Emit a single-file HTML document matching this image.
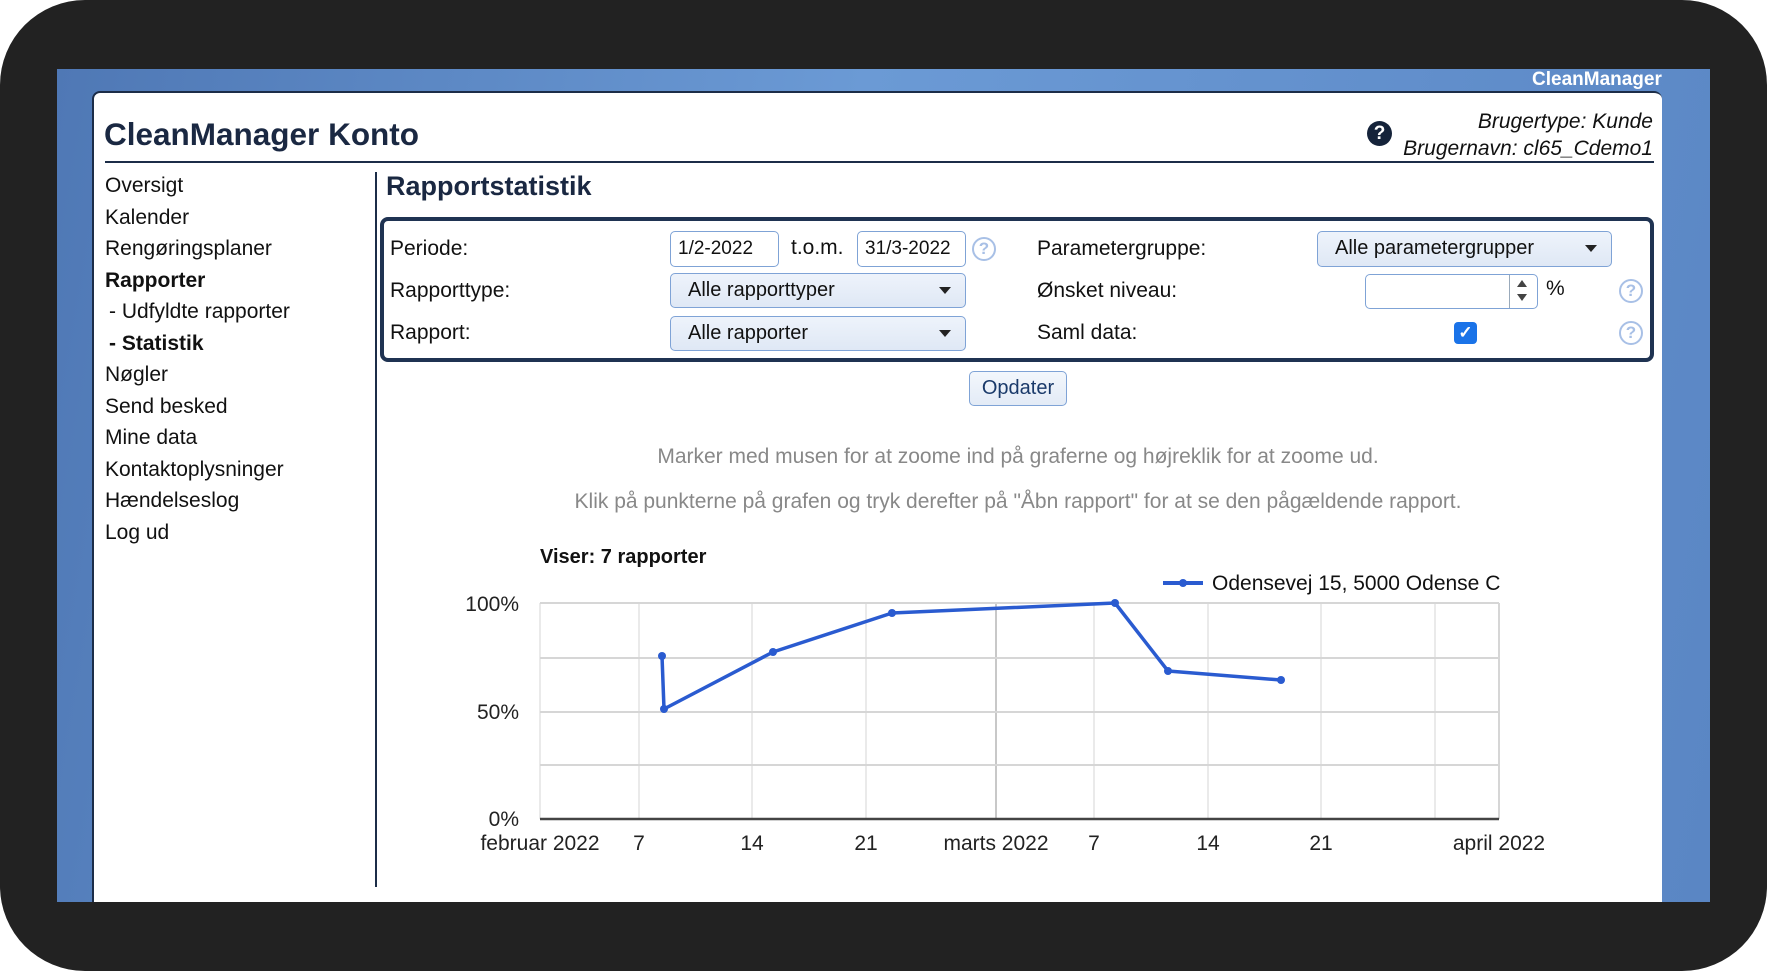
<!DOCTYPE html>
<html><head><meta charset="utf-8"><style>
*{margin:0;padding:0;box-sizing:border-box}
body{width:1767px;height:971px;background:#222;position:relative;overflow:hidden;font-family:"Liberation Sans",sans-serif;color:#111}
.a{position:absolute;white-space:nowrap}
#blue{left:57px;top:69px;width:1653px;height:833px;background:linear-gradient(100deg,#4f78b5 0%,#6b9ad5 45%,#5a86c4 100%)}
#panel{left:92px;top:91px;width:1570px;height:815px;background:#fff;border-radius:8px 8px 0 0;border-top:2px solid #1c2d48;border-left:2px solid #1c2d48}
.nav{left:105px;font-size:21px;color:#111}
.inp{border:1.5px solid #7fa3d6;border-radius:5px;background:#fff;font-size:19px;padding-left:7px;line-height:33px}
.sel{border:1.5px solid #7fa3d6;border-radius:5px;background:linear-gradient(#eef3fb,#dfe8f5);font-size:20px;padding-left:17px;line-height:32px}
.arr{position:absolute;right:14px;top:13px;width:0;height:0;border-left:6px solid transparent;border-right:6px solid transparent;border-top:7px solid #222}
.lbl{font-size:21px;left:390px}
.hq{width:24px;height:24px;border:2px solid #a8c0e6;border-radius:50%;color:#a8c0e6;font-size:17px;text-align:center;line-height:20px;font-weight:bold}
</style></head><body>
<div class="a" id="blue"></div>
<div class="a" style="left:1532px;top:69px;font-size:19px;font-weight:bold;color:#fff">CleanManager</div>
<div class="a" id="panel"></div>
<div class="a" style="left:104px;top:116px;font-size:31.5px;font-weight:bold;color:#1a2842">CleanManager Konto</div>
<div class="a" style="left:105px;top:161px;width:1549px;height:2px;background:#1c2d48"></div>
<div class="a" style="left:1367px;top:121px;width:25px;height:25px;border-radius:50%;background:#15233a;color:#fff;font-weight:bold;font-size:19px;text-align:center;line-height:25px">?</div>
<div class="a" style="right:114px;top:108px;font-size:21px;font-style:italic;text-align:right;line-height:27px">Brugertype: Kunde<br>Brugernavn: cl65_Cdemo1</div>

<div class="a nav" style="top:174px">Oversigt</div>
<div class="a nav" style="top:206px">Kalender</div>
<div class="a nav" style="top:237px">Rengøringsplaner</div>
<div class="a nav" style="top:269px;font-weight:bold">Rapporter</div>
<div class="a nav" style="top:300px;left:109px">- Udfyldte rapporter</div>
<div class="a nav" style="top:332px;left:109px;font-weight:bold">- Statistik</div>
<div class="a nav" style="top:363px">Nøgler</div>
<div class="a nav" style="top:395px">Send besked</div>
<div class="a nav" style="top:426px">Mine data</div>
<div class="a nav" style="top:458px">Kontaktoplysninger</div>
<div class="a nav" style="top:489px">Hændelseslog</div>
<div class="a nav" style="top:521px">Log ud</div>

<div class="a" style="left:375px;top:172px;width:2px;height:715px;background:#1c2d48"></div>
<div class="a" style="left:386px;top:171px;font-size:27px;font-weight:bold;color:#1a2842">Rapportstatistik</div>

<div class="a" style="left:380px;top:217px;width:1274px;height:145px;border:4px solid #1f3352;border-radius:8px"></div>
<div class="a lbl" style="top:237px">Periode:</div>
<div class="a lbl" style="top:279px">Rapporttype:</div>
<div class="a lbl" style="top:321px">Rapport:</div>
<div class="a inp" style="left:670px;top:231px;width:109px;height:36px">1/2-2022</div>
<div class="a" style="left:791px;top:236px;font-size:21px">t.o.m.</div>
<div class="a inp" style="left:857px;top:231px;width:109px;height:36px">31/3-2022</div>
<div class="a hq" style="left:972px;top:237px">?</div>
<div class="a sel" style="left:670px;top:273px;width:296px;height:35px">Alle rapporttyper<div class="arr"></div></div>
<div class="a sel" style="left:670px;top:316px;width:296px;height:35px">Alle rapporter<div class="arr"></div></div>

<div class="a" style="left:1037px;top:237px;font-size:21px">Parametergruppe:</div>
<div class="a" style="left:1037px;top:279px;font-size:21px">Ønsket niveau:</div>
<div class="a" style="left:1037px;top:321px;font-size:21px">Saml data:</div>
<div class="a sel" style="left:1317px;top:231px;width:295px;height:36px;line-height:33px">Alle parametergrupper<div class="arr"></div></div>
<div class="a inp" style="left:1365px;top:274px;width:173px;height:35px"></div>
<div class="a" style="left:1509px;top:275px;width:1px;height:33px;background:#9ab"></div>
<div class="a" style="left:1517px;top:280px;width:0;height:0;border-left:5px solid transparent;border-right:5px solid transparent;border-bottom:7px solid #444"></div>
<div class="a" style="left:1517px;top:294px;width:0;height:0;border-left:5px solid transparent;border-right:5px solid transparent;border-top:7px solid #444"></div>
<div class="a" style="left:1546px;top:277px;font-size:21px">%</div>
<div class="a hq" style="left:1619px;top:279px">?</div>
<div class="a" style="left:1454px;top:322px;width:23px;height:22px;border-radius:4px;background:#1a73e8;color:#fff;font-size:17px;text-align:center;line-height:22px;font-weight:bold">✓</div>
<div class="a hq" style="left:1619px;top:321px">?</div>

<div class="a" style="left:969px;top:371px;width:98px;height:35px;border:1.5px solid #7fa3d6;border-radius:5px;background:linear-gradient(#f3f7fc,#e3ebf6);font-size:20px;color:#1a3a6a;text-align:center;line-height:32px">Opdater</div>

<div class="a" style="left:0;width:2036px;top:445px;text-align:center;font-size:21px;color:#888">Marker med musen for at zoome ind på graferne og højreklik for at zoome ud.</div>
<div class="a" style="left:0;width:2036px;top:490px;text-align:center;font-size:21px;color:#888">Klik på punkterne på grafen og tryk derefter på "Åbn rapport" for at se den pågældende rapport.</div>

<svg class="a" style="left:0;top:0" width="1767" height="971" font-family="Liberation Sans, sans-serif">
<text x="540" y="563" font-size="20" font-weight="bold" fill="#111">Viser: 7 rapporter</text>
<line x1="1163" y1="583" x2="1203" y2="583" stroke="#2a5bd0" stroke-width="4"/>
<circle cx="1183" cy="583" r="4" fill="#2a5bd0"/>
<text x="1212" y="590" font-size="21" fill="#111">Odensevej 15, 5000 Odense C</text>
<g stroke="#e3e3e3" stroke-width="1.5">
<line x1="639" y1="603" x2="639" y2="819"/><line x1="752" y1="603" x2="752" y2="819"/><line x1="866" y1="603" x2="866" y2="819"/>
<line x1="1094" y1="603" x2="1094" y2="819"/><line x1="1208" y1="603" x2="1208" y2="819"/><line x1="1321" y1="603" x2="1321" y2="819"/><line x1="1435" y1="603" x2="1435" y2="819"/><line x1="540" y1="603" x2="540" y2="819"/>
</g>
<line x1="996" y1="603" x2="996" y2="819" stroke="#c8c8c8" stroke-width="2"/>
<g stroke="#d6d6d6" stroke-width="2">
<line x1="540" y1="603" x2="1499" y2="603"/><line x1="540" y1="658" x2="1499" y2="658"/><line x1="540" y1="712" x2="1499" y2="712"/><line x1="540" y1="765" x2="1499" y2="765"/><line x1="1499" y1="603" x2="1499" y2="819"/>
</g>
<line x1="540" y1="819" x2="1499" y2="819" stroke="#444" stroke-width="2.5"/>
<polyline points="662,656 664,709 773,652 892,613 1115,603 1168,671 1281,680" fill="none" stroke="#2a5bd0" stroke-width="3.5" stroke-linejoin="round"/>
<g fill="#2a5bd0"><circle cx="662" cy="656" r="4"/><circle cx="664" cy="709" r="4"/><circle cx="773" cy="652" r="4"/><circle cx="892" cy="613" r="4"/><circle cx="1115" cy="603" r="4"/><circle cx="1168" cy="671" r="4"/><circle cx="1281" cy="680" r="4"/></g>
<g font-size="21" fill="#222" text-anchor="end">
<text x="519" y="611">100%</text><text x="519" y="719">50%</text><text x="519" y="826">0%</text></g>
<g font-size="21" fill="#222" text-anchor="middle">
<text x="540" y="850">februar 2022</text><text x="639" y="850">7</text><text x="752" y="850">14</text><text x="866" y="850">21</text>
<text x="996" y="850">marts 2022</text><text x="1094" y="850">7</text><text x="1208" y="850">14</text><text x="1321" y="850">21</text><text x="1499" y="850">april 2022</text></g>
</svg>
<svg class="a" style="left:0;top:0" width="1767" height="971">
<rect x="0" y="902" width="1767" height="69" fill="#222"/>
<path d="M0 0H85A85 85 0 0 0 0 85Z" fill="#fff"/>
<path d="M1767 0H1682A85 85 0 0 1 1767 85Z" fill="#fff"/>
<path d="M0 971H85A85 85 0 0 1 0 886Z" fill="#fff"/>
<path d="M1767 971H1682A85 85 0 0 0 1767 886Z" fill="#fff"/>
</svg>
</body></html>
